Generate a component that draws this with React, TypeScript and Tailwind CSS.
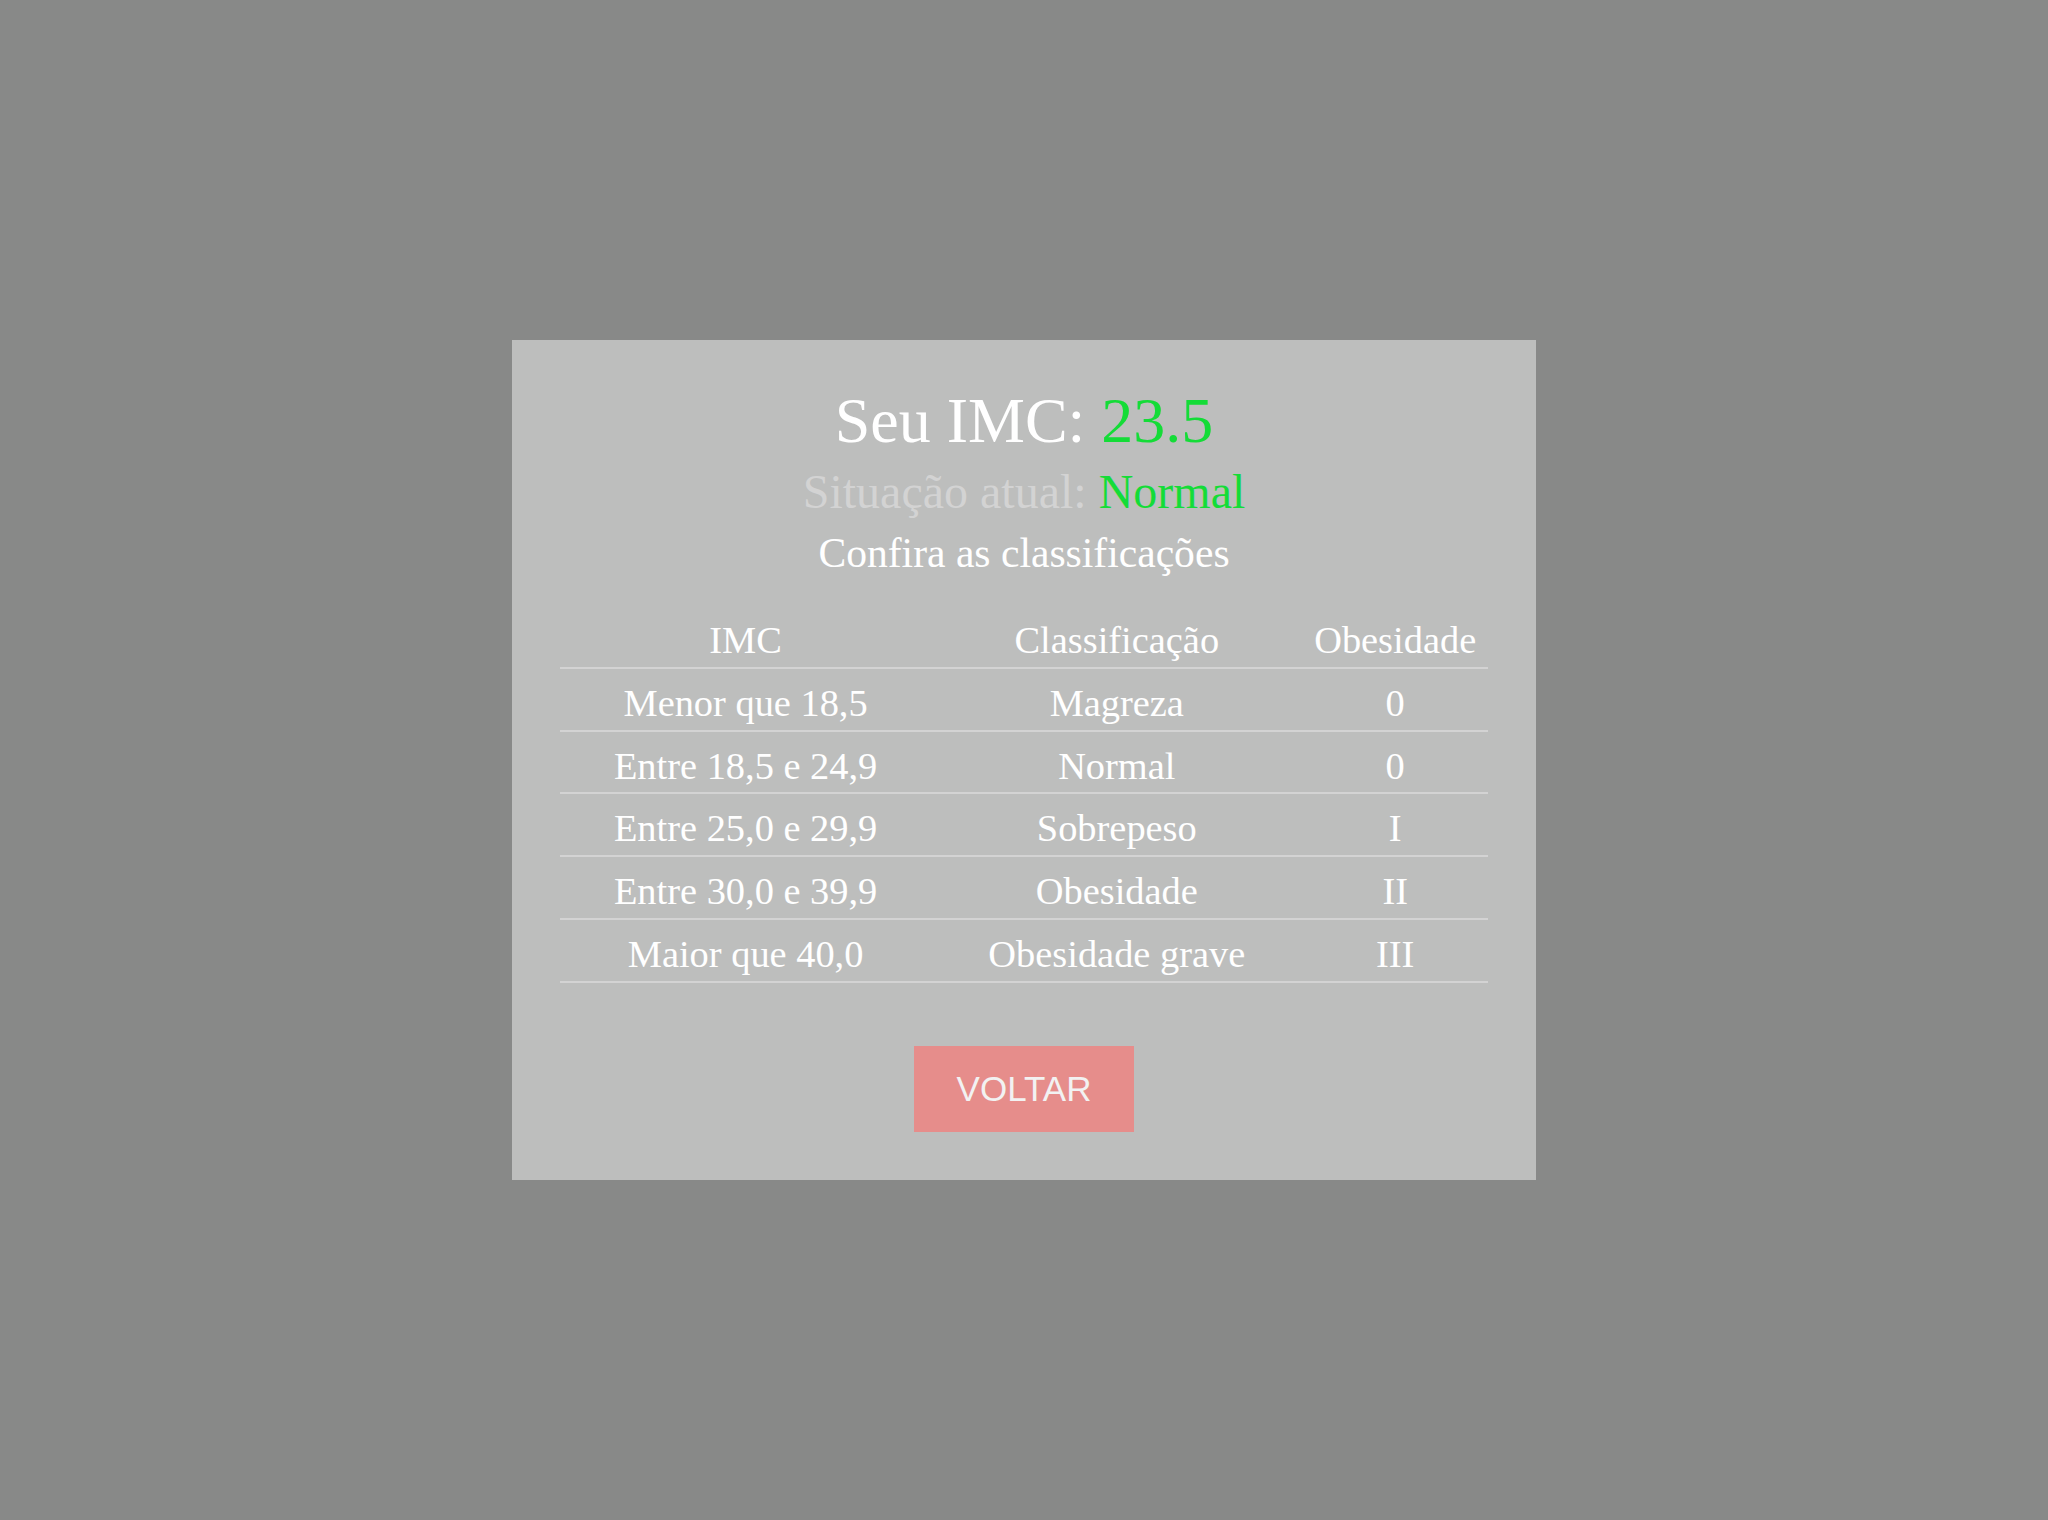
import React from "react";

const rows = [
  ["Menor que 18,5", "Magreza", "0"],
  ["Entre 18,5 e 24,9", "Normal", "0"],
  ["Entre 25,0 e 29,9", "Sobrepeso", "I"],
  ["Entre 30,0 e 39,9", "Obesidade", "II"],
  ["Maior que 40,0", "Obesidade grave", "III"],
];

export default function App() {
  return (
    <div className="w-full h-[1520px] bg-[#888988] flex items-center justify-center [font-family:'Liberation_Serif','Times_New_Roman',serif]">
      <div className="w-[1024px] bg-[#bdbebd] pt-[44px] pb-[48px] px-[48px] flex flex-col items-center text-white">
        <div className="text-[64px] leading-[73.6px]">
          Seu IMC: <span className="text-[#14dc37]">23.5</span>
        </div>
        <div className="mt-[6.4px] text-[48px] leading-[55.2px] text-[#d3d3d3]">
          Situação atual: <span className="text-[#14dc37]">Normal</span>
        </div>
        <div className="mt-[10.5px] text-[41.6px] leading-[47.8px]">Confira as classificações</div>
        <table className="mt-[29px] w-full border-collapse table-fixed text-[38.4px] leading-[44.2px]">
          <colgroup>
            <col className="w-[40%]" />
            <col className="w-[40%]" />
            <col className="w-[20%]" />
          </colgroup>
          <thead>
            <tr className="border-b-2 border-[#d3d3d3]">
              <th className="font-normal text-center pt-[12px] pb-[4.5px] px-0">IMC</th>
              <th className="font-normal text-center pt-[12px] pb-[4.5px] px-0">Classificação</th>
              <th className="font-normal text-center pt-[12px] pb-[4.5px] px-0">Obesidade</th>
            </tr>
          </thead>
          <tbody>
            {rows.map((r, i) => (
              <tr key={i} className="border-b-2 border-[#d3d3d3]">
                {r.map((c, j) => (
                  <td key={j} className="text-center pt-[12px] pb-[4.5px] px-0 whitespace-nowrap">
                    {c}
                  </td>
                ))}
              </tr>
            ))}
          </tbody>
        </table>
        <button className="mt-[63.5px] w-[220px] h-[86px] bg-[#e68d8b] text-[#f2f2f2] text-[35px] leading-[40px] [font-family:'Liberation_Sans',Arial,sans-serif] flex items-center justify-center">
          VOLTAR
        </button>
      </div>
    </div>
  );
}
